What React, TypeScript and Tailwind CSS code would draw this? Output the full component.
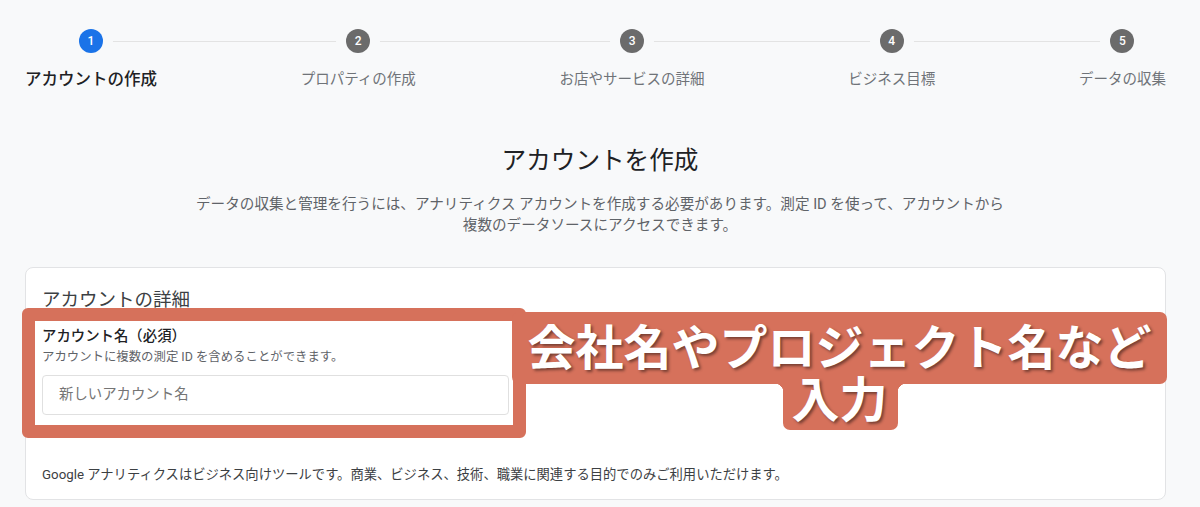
import React from 'react';

const steps = [
  { n: 1, label: 'アカウントの作成', active: true },
  { n: 2, label: 'プロパティの作成', active: false },
  { n: 3, label: 'お店やサービスの詳細', active: false },
  { n: 4, label: 'ビジネス目標', active: false },
  { n: 5, label: 'データの収集', active: false },
];

function Stepper() {
  return (
    <div className="relative flex justify-between pl-[25px] pr-[34px] pt-[29px]">
      {/* connector line behind the circles */}
      <div className="absolute left-[91px] right-[78px] top-[41px] h-px bg-[#e3e3e3]" />
      {steps.map((s) => (
        <div key={s.n} className="flex flex-col items-center">
          <div
            className={`relative z-10 flex h-6 w-6 items-center justify-center rounded-full text-[12px] font-medium text-white ring-[10px] ring-[#f8f9fa] ${
              s.active ? 'bg-[#1a73e8]' : 'bg-[#6b6b6b]'
            }`}
          >
            {s.n}
          </div>
          <div className="mt-[15px] flex h-6 items-center">
            {s.active ? (
              <span className="text-[16.5px] font-medium text-[#202124]">{s.label}</span>
            ) : (
              <span className="text-[14.5px] text-[#6f7378]">{s.label}</span>
            )}
          </div>
        </div>
      ))}
    </div>
  );
}

export default function App() {
  return (
    <div className="relative h-[507px] w-full overflow-hidden bg-[#f8f9fa] font-['Roboto','Noto_Sans_CJK_JP',sans-serif]">
      <Stepper />

      <div className="mt-[53px] text-center">
        <h1 className="text-[24.6px] leading-8 font-normal text-[#202124]">アカウントを作成</h1>
        <p className="mt-[17px] text-[14.6px] leading-[21px] text-[#5f6368]">
          データの収集と管理を行うには、アナリティクス アカウントを作成する必要があります。測定 ID を使って、アカウントから
          <br />
          複数のデータソースにアクセスできます。
        </p>
      </div>

      <div className="mt-[31px] ml-[25px] h-[233px] w-[1141px] rounded-lg border border-[#e2e3e5] bg-white px-[16px] pt-[18px]">
        <h2 className="text-[18.5px] leading-7 text-[#3c4043]">アカウントの詳細</h2>
        <div className="mt-[12px] w-[467px]">
          <div className="text-[14.4px] leading-[22px] font-medium text-[#202124]">アカウント名（必須）</div>
          <div className="text-[12.4px] leading-[18px] text-[#5f6368]">アカウントに複数の測定 ID を含めることができます。</div>
          <div className="mt-[9px] flex h-10 items-center rounded border border-[#e0e0e0] px-4 text-[14.4px] text-[#757575]">
            新しいアカウント名
          </div>
        </div>
        <p className="mt-[50px] text-[13.3px] leading-5 text-[#3c4043]">
          Google アナリティクスはビジネス向けツールです。商業、ビジネス、技術、職業に関連する目的でのみご利用いただけます。
        </p>
      </div>

      {/* annotation: frame around the account name field */}
      <div className="absolute left-[22px] top-[308px] h-[130px] w-[504px] rounded-[6px] border-[13px] border-[#d6715b]" />

      {/* annotation: callout */}
      <div className="absolute left-[512px] top-[312px] h-[72px] w-[655px] rounded-[7px] bg-[#d6715b]" />
      <div className="absolute left-[783px] top-[380px] h-[50px] w-[115px] rounded-b-[7px] bg-[#d6715b]" />
      <div className="absolute left-[775px] top-[384px] h-2 w-2 bg-[radial-gradient(circle_at_0_100%,transparent_8px,#d6715b_8.5px)]" />
      <div className="absolute left-[898px] top-[384px] h-2 w-2 bg-[radial-gradient(circle_at_100%_100%,transparent_8px,#d6715b_8.5px)]" />
      <div className="absolute left-[512px] top-[323px] w-[655px] text-center text-[48px] leading-[52px] font-bold text-white [text-shadow:2px_2px_3px_rgba(0,0,0,0.45)]">
        会社名やプロジェクト名など
        <br />
        入力
      </div>
    </div>
  );
}
